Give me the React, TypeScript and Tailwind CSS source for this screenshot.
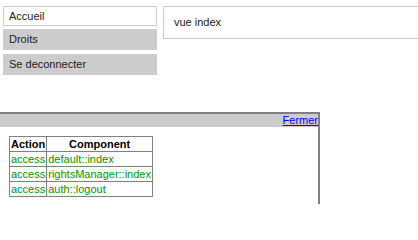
import React from "react";

export default function App() {
  const rows = [
    ["access", "default::index"],
    ["access", "rightsManager::index"],
    ["access", "auth::logout"],
  ];
  return (
    <div className="w-[418px] h-[204px] overflow-hidden bg-white font-['Liberation_Sans',Arial,sans-serif] text-[11px] text-[#222]">
      <div className="flex pt-[6px] pl-[3px] gap-[6px]">
        <div className="w-[154px] flex flex-col gap-[3px] shrink-0">
          <div className="h-[20px] border border-[#ccc] bg-white flex items-center pl-[5px] leading-[13px]">Accueil</div>
          <div className="h-[21px] bg-[#ccc] flex items-center pl-[6px] leading-[13px]">Droits</div>
          <div className="h-[21px] bg-[#ccc] flex items-center pl-[6px] leading-[13px] mt-[1px]">Se deconnecter</div>
        </div>
        <div className="flex-1 -mr-[2px] h-[33px] border border-[#ccc] flex items-center pl-[10px] leading-[13px]">
          vue index
        </div>
      </div>
      <div className="mt-[37px] -ml-[10px] w-[330px] h-[120px] border-2 border-[#808080]">
        <div className="h-[13px] bg-[#ccc] flex justify-end">
          <a href="#" className="text-[#0000ee] underline leading-[13px]">Fermer</a>
        </div>
        <div className="pt-[9px] pl-[17px]">
          <table className="border-collapse border border-[#808080] text-[11px]">
            <thead>
              <tr>
                <th className="border border-[#808080] px-[1px] py-0 leading-[14px] font-bold text-black">Action</th>
                <th className="border border-[#808080] px-[1px] py-0 leading-[14px] font-bold text-black">Component</th>
              </tr>
            </thead>
            <tbody>
              {rows.map((r, i) => (
                <tr key={i}>
                  <td className="border border-[#808080] px-[1px] py-0 leading-[14px] text-[#009600]">{r[0]}</td>
                  <td className="border border-[#808080] px-[1px] py-0 leading-[14px] text-[#009600]">{r[1]}</td>
                </tr>
              ))}
            </tbody>
          </table>
        </div>
      </div>
    </div>
  );
}
